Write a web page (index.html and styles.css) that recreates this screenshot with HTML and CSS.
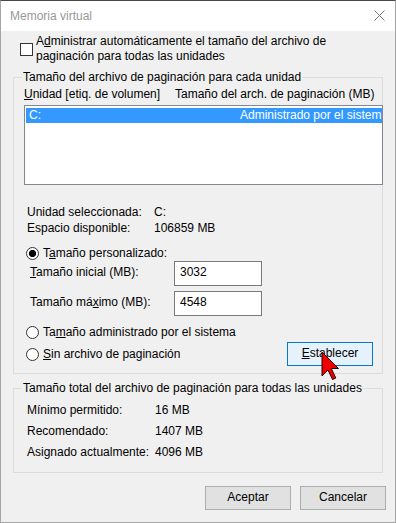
FILE: index.html
```html
<!DOCTYPE html>
<html lang="es">
<head>
<meta charset="utf-8">
<title>Memoria virtual</title>
<link rel="stylesheet" href="styles.css">
</head>
<body>
<div class="window">
  <div class="titlebar">
    <span class="title">Memoria virtual</span>
    <svg class="close" width="11" height="11" viewBox="0 0 11 11"><path d="M0.5 0.5 L10.5 10.5 M10.5 0.5 L0.5 10.5" stroke="#7a7a7a" stroke-width="1" fill="none"/></svg>
  </div>
  <div class="content">
    <div class="chkrow">
      <span class="checkbox"></span>
      <span class="chklabel">A<u>d</u>ministrar automáticamente el tamaño del archivo de<br>paginación para todas las unidades</span>
    </div>

    <fieldset class="group g1">
      <legend>Tamaño del archivo de paginación para cada unidad</legend>
      <div class="colhead">
        <span><u>U</u>nidad [etiq. de volumen]</span>
        <span>Tamaño del arch. de paginación (MB)</span>
      </div>
      <div class="listbox">
        <div class="row sel">
          <span class="cell1">C:</span>
          <span class="cell2">Administrado por el sistema</span>
        </div>
      </div>
      <div class="info">
        <span>Unidad seleccionada:</span><span>C:</span>
        <span>Espacio disponible:</span><span>106859 MB</span>
      </div>
      <div class="radio-row r1">
        <span class="radio on"></span>
        <span>T<u>a</u>maño personalizado:</span>
      </div>
      <div class="field f1">
        <span class="flabel"><u>T</u>amaño inicial (MB):</span>
        <span class="textbox">3032</span>
      </div>
      <div class="field f2">
        <span class="flabel">Tamaño má<u>x</u>imo (MB):</span>
        <span class="textbox">4548</span>
      </div>
      <div class="radio-row r2">
        <span class="radio"></span>
        <span>Ta<u>m</u>año administrado por el sistema</span>
      </div>
      <div class="radio-row r3">
        <span class="radio"></span>
        <span><u>S</u>in archivo de paginación</span>
        <span class="btn btn-hot"><u>E</u>stablecer</span>
      </div>
    </fieldset>

    <fieldset class="group g2">
      <legend>Tamaño total del archivo de paginación para todas las unidades</legend>
      <div class="totals">
        <span>Mínimo permitido:</span><span>16 MB</span>
        <span>Recomendado:</span><span>1407 MB</span>
        <span>Asignado actualmente:</span><span>4096 MB</span>
      </div>
    </fieldset>

    <div class="buttons">
      <span class="btn">Aceptar</span>
      <span class="btn">Cancelar</span>
    </div>
  </div>
  <svg class="cursor" width="20" height="31" viewBox="0 0 20 31"><path d="M1 1 L1 25 L7 19 L11.5 28.5 L14.8 27 L10.3 17.5 L17.5 17.5 Z" fill="#ee0000" stroke="#2a0000" stroke-width="1" stroke-linejoin="miter"/></svg>
</div>
</body>
</html>
```

FILE: styles.css
```css
* {
  box-sizing: border-box;
}

html, body {
  margin: 0;
  padding: 0;
  background: #f0f0f0;
}

body {
  font-family: "Liberation Sans", Arial, sans-serif;
  font-size: 12px;
  line-height: 16px;
  color: #000;
}

.window {
  position: relative;
  width: 396px;
  height: 523px;
  display: flex;
  flex-direction: column;
  border-top: 1px solid #474747;
  border-left: 1px solid #a6a6a6;
  border-right: 1px solid #a6a6a6;
  border-bottom: 1px solid #a6a6a6;
  background: #f0f0f0;
  overflow: hidden;
}

.titlebar {
  height: 30px;
  flex: none;
  background: #fff;
  display: flex;
  justify-content: space-between;
  align-items: flex-start;
  padding: 7px 10px 0 9px;
}

.title {
  color: #999;
}

.close {
  display: block;
  margin-top: 2px;
}

.content {
  flex: 1;
  display: flex;
  flex-direction: column;
  align-items: flex-start;
  padding-top: 3px;
}

.chkrow {
  display: flex;
  align-items: flex-start;
  padding-left: 19px;
  gap: 3px;
}

.checkbox {
  width: 13px;
  height: 13px;
  margin-top: 9px;
  border: 1px solid #333;
  background: #fff;
  flex: none;
}

.chklabel {
  line-height: 15px;
}

.group {
  margin: 0 0 0 12px;
  padding: 0;
  width: 370px;
  min-width: 0;
  border: 1px solid #dcdcdc;
}

.group legend {
  margin-left: 8px;
  padding: 0 1px;
  line-height: 16px;
}

.g1 {
  margin-top: 5px;
  padding-bottom: 7px;
}

.colhead {
  margin-top: 1px;
  padding-left: 10px;
  display: grid;
  grid-template-columns: 151px auto;
}

.listbox {
  margin-top: 3px;
  margin-left: 10px;
  width: 359px;
  height: 80px;
  border: 1px solid #828790;
  background: #fff;
  padding: 2px 0 0 1px;
}

.row {
  height: 15px;
  line-height: 15px;
  display: grid;
  grid-template-columns: 214px 1fr;
  overflow: hidden;
}

.row.sel {
  background: #3399ff;
  color: #fff;
}

.cell1 {
  padding-left: 3px;
}

.cell2 {
  white-space: nowrap;
  overflow: hidden;
}

.info {
  margin-top: 19px;
  padding-left: 13px;
  display: grid;
  grid-template-columns: 127px auto;
}

.radio-row {
  display: flex;
  align-items: center;
  padding-left: 12px;
  gap: 4px;
}

.r1 {
  margin-top: 9px;
}

.r2 {
  margin-top: 8px;
}

.r3 {
  margin-top: 2px;
  height: 24px;
}

.radio {
  width: 13px;
  height: 13px;
  border: 1px solid #333;
  border-radius: 50%;
  background: #fff;
  flex: none;
}

.radio.on {
  background: radial-gradient(circle, #000 0 3.3px, #fff 3.9px);
}

.field {
  display: flex;
  align-items: flex-start;
  padding-left: 16px;
}

.f2 {
  margin-top: 5px;
}

.flabel {
  width: 144px;
  margin-top: 3px;
}

.textbox {
  width: 88px;
  height: 25px;
  border: 1px solid #7a7a7a;
  background: #fff;
  padding: 2px 5px 0;
}

.btn {
  display: block;
  width: 86px;
  height: 24px;
  border: 1px solid #adadad;
  background: #e1e1e1;
  text-align: center;
  line-height: 20px;
}

.btn-hot {
  margin-left: auto;
  margin-right: 9px;
  border-color: #0078d7;
  background: #e5f1fb;
}

.g2 {
  margin-top: 6px;
  padding-bottom: 12px;
}

.totals {
  margin-top: 6px;
  padding-left: 13px;
  display: grid;
  grid-template-columns: 128px auto;
  row-gap: 5px;
}

.buttons {
  margin-top: 13px;
  align-self: stretch;
  display: flex;
  justify-content: flex-end;
  gap: 9px;
  padding-right: 9px;
}

.cursor {
  position: absolute;
  left: 320px;
  top: 350px;
  display: block;
}
```
